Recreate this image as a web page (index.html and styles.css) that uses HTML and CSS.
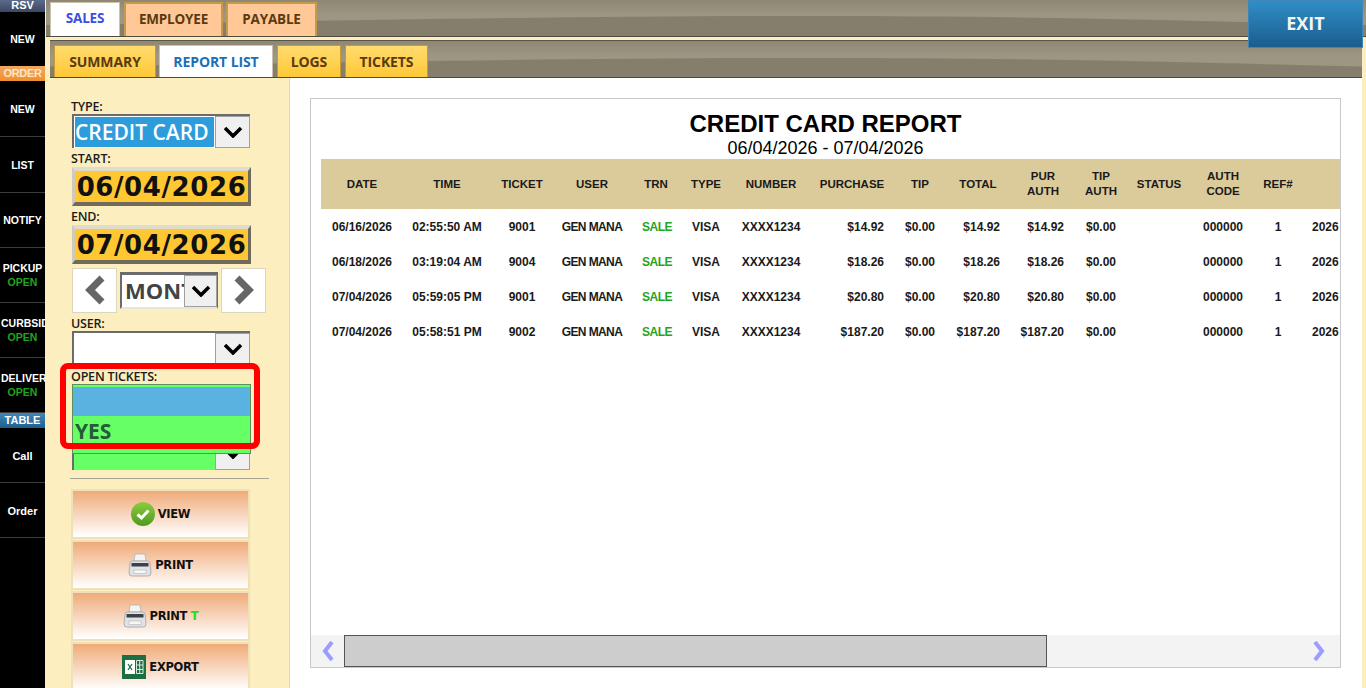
FILE: index.html
```html
<!DOCTYPE html>
<html lang="en">
<head>
    <meta charset="UTF-8">
    <title>Credit Card Report</title>
    <link rel="stylesheet" href="styles.css">
</head>
<body>
    <!-- Left black menu -->
    <nav class="side-menu">
        <div class="side-head head-rsv">RSV</div>
        <div class="side-item item-first">NEW</div>
        <div class="side-head head-order">ORDER</div>
        <div class="side-item item-tall">NEW</div>
        <div class="side-item item-tall">LIST</div>
        <div class="side-item">NOTIFY</div>
        <div class="side-item">PICKUP<span class="open-text">OPEN</span></div>
        <div class="side-item item-clip"><span class="clip-name">CURBSIDE</span><span class="open-text">OPEN</span></div>
        <div class="side-item item-clip"><span class="clip-name">DELIVERY</span><span class="open-text">OPEN</span></div>
        <div class="side-head head-table">TABLE</div>
        <div class="side-item item-plain">Call</div>
        <div class="side-item item-plain">Order</div>
    </nav>

    <main class="main">
        <div class="tab-bar top-bar">
            <svg class="wave" viewBox="0 0 1320 36" preserveAspectRatio="none"><path d="M0 25 C300 21 500 16 760 16 C1000 16 1150 21 1320 25 V36 H0 Z" fill="#857e6c"/></svg>
            <div class="tab tab-active tab-sales">SALES</div>
            <div class="tab tab-orange tab-employee">EMPLOYEE</div>
            <div class="tab tab-orange tab-payable">PAYABLE</div>
        </div>
        <div class="tab-bar sub-bar">
            <svg class="wave" viewBox="0 0 1312 38" preserveAspectRatio="none"><path d="M0 27 C300 23 500 18 760 18 C1000 18 1150 23 1312 27 V38 H0 Z" fill="#857e6c"/></svg>
            <div class="tab tab-yellow tab-summary">SUMMARY</div>
            <div class="tab tab-active tab-report">REPORT LIST</div>
            <div class="tab tab-yellow tab-logs">LOGS</div>
            <div class="tab tab-yellow tab-tickets">TICKETS</div>
        </div>

        <div class="work">
            <aside class="filters">
                <div class="field-label">TYPE:</div>
                <div class="select">
                    <div class="select-value value-blue">CREDIT CARD</div>
                    <div class="select-btn"><svg class="chev" viewBox="0 0 20 12"><path d="M2 2 L10 10 L18 2"/></svg></div>
                </div>

                <div class="field-label label-gap">START:</div>
                <div class="date-box">06/04/2026</div>
                <div class="field-label label-gap">END:</div>
                <div class="date-box">07/04/2026</div>

                <div class="period-row">
                    <div class="arrow-btn"><svg viewBox="0 0 24 32" class="arrow-icon"><path d="M19 4 L7 16 L19 28"/></svg></div>
                    <div class="period-select">
                        <div class="period-value">MONTH</div>
                        <div class="select-btn period-btn"><svg class="chev" viewBox="0 0 20 12"><path d="M2 2 L10 10 L18 2"/></svg></div>
                    </div>
                    <div class="arrow-btn"><svg viewBox="0 0 24 32" class="arrow-icon"><path d="M5 4 L17 16 L5 28"/></svg></div>
                </div>

                <div class="field-label label-user">USER:</div>
                <div class="select">
                    <div class="select-value value-white"></div>
                    <div class="select-btn"><svg class="chev" viewBox="0 0 20 12"><path d="M2 2 L10 10 L18 2"/></svg></div>
                </div>

                <div class="open-field">
                    <div class="field-label label-open">OPEN TICKETS:</div>
                    <div class="select select-open">
                        <div class="select-value value-green"></div>
                        <div class="select-btn"><svg class="chev" viewBox="0 0 20 12"><path d="M2 2 L10 10 L18 2"/></svg></div>
                    </div>
                    <div class="drop-list">
                        <div class="drop-blank"></div>
                        <div class="drop-yes">YES</div>
                    </div>
                    <div class="red-mark"></div>
                </div>

                <div class="divider"></div>

                <div class="action-btn">
                    <svg class="action-icon" viewBox="0 0 24 24">
                        <defs><linearGradient id="okGrad" x1="0" y1="0" x2="0" y2="1"><stop offset="0" stop-color="#8ccb3e"/><stop offset="1" stop-color="#4f9a1e"/></linearGradient></defs>
                        <circle cx="12" cy="12" r="12" fill="url(#okGrad)"/>
                        <path d="M6.5 12.5 L10.5 16 L17.5 8.5" fill="none" stroke="#fff" stroke-width="3"/>
                    </svg>
                    <span>VIEW</span>
                </div>
                <div class="action-btn">
                    <svg class="action-icon" viewBox="0 0 24 24">
                        <path d="M6 8 L7 1 H17 L18 8 Z" fill="#f4f4f4" stroke="#aaa" stroke-width="0.7"/>
                        <path d="M2 10 Q2 8 5 8 H19 Q22 8 22 10 L23 20 Q23 23 20 23 H4 Q1 23 1 20 Z" fill="#dfe2e6" stroke="#9a9a9a" stroke-width="0.7"/>
                        <rect x="3.5" y="10" width="17" height="3.5" fill="#3c4148"/>
                        <rect x="6" y="17" width="12" height="3.5" fill="#f7f7f7" stroke="#aaa" stroke-width="0.5"/>
                    </svg>
                    <span>PRINT</span>
                </div>
                <div class="action-btn">
                    <svg class="action-icon" viewBox="0 0 24 24">
                        <path d="M6 8 L7 1 H17 L18 8 Z" fill="#f4f4f4" stroke="#aaa" stroke-width="0.7"/>
                        <path d="M2 10 Q2 8 5 8 H19 Q22 8 22 10 L23 20 Q23 23 20 23 H4 Q1 23 1 20 Z" fill="#dfe2e6" stroke="#9a9a9a" stroke-width="0.7"/>
                        <rect x="3.5" y="10" width="17" height="3.5" fill="#3c4148"/>
                        <rect x="6" y="17" width="12" height="3.5" fill="#f7f7f7" stroke="#aaa" stroke-width="0.5"/>
                    </svg>
                    <span>PRINT <b class="green-t">T</b></span>
                </div>
                <div class="action-btn">
                    <svg class="action-icon" viewBox="0 0 24 24">
                        <rect width="24" height="24" fill="#1d6f42"/>
                        <rect x="3" y="5" width="10" height="14" fill="#fff"/>
                        <path d="M6 9 L10 15 M10 9 L6 15" stroke="#1d6f42" stroke-width="1.3"/>
                        <path d="M14.5 5.5 H21 V18.5 H14.5 Z M14.5 10 H21 M14.5 14.5 H21 M17.7 5.5 V18.5" fill="none" stroke="#d8eadf" stroke-width="1"/>
                    </svg>
                    <span>EXPORT</span>
                </div>
            </aside>

            <section class="content">
                <div class="report">
                    <h1 class="report-title">CREDIT CARD REPORT</h1>
                    <p class="report-range">06/04/2026 - 07/04/2026</p>
                    <div class="table-wrap">
                        <table class="report-table">
                            <colgroup>
                                <col class="c82"><col class="c88"><col class="c62"><col class="c78"><col class="c50"><col class="c50"><col class="c80"><col class="c82"><col class="c54"><col class="c62"><col class="c62"><col class="c60"><col class="c56"><col class="c72"><col class="c38"><col class="c43">
                            </colgroup>
                            <thead>
                                <tr>
                                    <th>DATE</th><th>TIME</th><th>TICKET</th><th>USER</th><th>TRN</th><th>TYPE</th><th>NUMBER</th><th>PURCHASE</th><th>TIP</th><th>TOTAL</th><th class="th-pur">PUR<br>AUTH</th><th>TIP<br>AUTH</th><th>STATUS</th><th>AUTH<br>CODE</th><th>REF#</th><th></th>
                                </tr>
                            </thead>
                            <tbody>
                                <tr><td>06/16/2026</td><td>02:55:50 AM</td><td>9001</td><td class="user">GEN MANA</td><td class="sale">SALE</td><td>VISA</td><td>XXXX1234</td><td class="money">$14.92</td><td>$0.00</td><td class="money">$14.92</td><td class="money money-auth">$14.92</td><td>$0.00</td><td></td><td>000000</td><td>1</td><td class="year">2026</td></tr>
                                <tr><td>06/18/2026</td><td>03:19:04 AM</td><td>9004</td><td class="user">GEN MANA</td><td class="sale">SALE</td><td>VISA</td><td>XXXX1234</td><td class="money">$18.26</td><td>$0.00</td><td class="money">$18.26</td><td class="money money-auth">$18.26</td><td>$0.00</td><td></td><td>000000</td><td>1</td><td class="year">2026</td></tr>
                                <tr><td>07/04/2026</td><td>05:59:05 PM</td><td>9001</td><td class="user">GEN MANA</td><td class="sale">SALE</td><td>VISA</td><td>XXXX1234</td><td class="money">$20.80</td><td>$0.00</td><td class="money">$20.80</td><td class="money money-auth">$20.80</td><td>$0.00</td><td></td><td>000000</td><td>1</td><td class="year">2026</td></tr>
                                <tr><td>07/04/2026</td><td>05:58:51 PM</td><td>9002</td><td class="user">GEN MANA</td><td class="sale">SALE</td><td>VISA</td><td>XXXX1234</td><td class="money">$187.20</td><td>$0.00</td><td class="money">$187.20</td><td class="money money-auth">$187.20</td><td>$0.00</td><td></td><td>000000</td><td>1</td><td class="year">2026</td></tr>
                            </tbody>
                        </table>
                    </div>
                    <div class="h-scroll">
                        <div class="scroll-end"><svg viewBox="0 0 14 20" class="scroll-arrow"><path d="M11 1 L4 10 L11 19"/></svg></div>
                        <div class="scroll-thumb"></div>
                        <div class="scroll-rest"><svg viewBox="0 0 14 20" class="scroll-arrow"><path d="M3 1 L10 10 L3 19"/></svg></div>
                    </div>
                </div>
            </section>
        </div>

        <div class="exit-btn">EXIT</div>
    </main>
</body>
</html>
```

FILE: styles.css
```css
* {
    box-sizing: border-box;
    margin: 0;
    padding: 0;
}

html, body {
    height: 688px;
    overflow: hidden;
}

body {
    display: flex;
    background-color: #fdeebf;
    font-family: 'Liberation Sans', Arial, sans-serif;
}

/* Left menu */
.side-menu {
    width: 45px;
    height: 688px;
    flex-shrink: 0;
    background-color: #000;
    color: #fff;
    overflow: hidden;
}

.side-head {
    width: 45px;
    color: #fff;
    font-size: 11px;
    font-weight: bold;
    text-align: center;
}

.head-rsv {
    height: 12px;
    line-height: 10px;
    background: linear-gradient(#5c6a8c, #3d4660);
}

.head-order {
    height: 15px;
    line-height: 15px;
    background: linear-gradient(#f0a860, #f28e2c);
    color: #fde7c9;
    letter-spacing: -0.3px;
}

.head-table {
    height: 15px;
    line-height: 15px;
    background: linear-gradient(#3f88b8, #1f5f8c);
}

.side-item {
    height: 55px;
    border-bottom: 1px solid #3c3c3c;
    display: flex;
    flex-direction: column;
    align-items: center;
    justify-content: center;
    font-size: 10.5px;
    font-weight: bold;
    line-height: 14px;
    white-space: nowrap;
}

.item-first {
    height: 54px;
    border-bottom: none;
}

.item-tall {
    height: 56px;
}

.item-plain {
    font-size: 11px;
    padding-top: 1px;
}

.clip-name {
    align-self: stretch;
    padding-left: 1px;
    overflow: hidden;
}

.open-text {
    color: #1fa51f;
}

/* Main area */
.main {
    position: relative;
    flex: 1;
    height: 688px;
    display: flex;
    flex-direction: column;
    min-width: 0;
}

.tab-bar {
    position: relative;
    overflow: hidden;
    background: linear-gradient(#8d8773, #9c9683 40%);
    border-bottom: 1px solid #4f4a3e;
}

.wave {
    position: absolute;
    top: 0;
    left: 0;
    width: 100%;
    height: 100%;
}

.top-bar {
    height: 37px;
    margin-left: 1px;
}

.sub-bar {
    height: 38px;
    margin: 3px 4px 0 5px;
    border-top: 1px solid #5a5546;
}

.tab {
    position: absolute;
    bottom: 0;
    display: flex;
    align-items: center;
    justify-content: center;
    font-family: 'Open Sans', sans-serif;
    font-weight: 700;
    font-size: 13.5px;
    color: #5a3a10;
    letter-spacing: -0.2px;
}

.tab-active {
    background-color: #fff;
    border: 1px solid #c9c3ad;
    border-bottom: none;
}

.tab-orange {
    background-color: #ffc896;
    border: 2px solid #c49a4e;
    border-bottom: none;
}

.tab-yellow {
    background: linear-gradient(#ffdb6e, #ffc936);
    border-top: 1px solid #c99a30;
    border-left: 1px solid #c99a30;
    border-right: 1px solid #c99a30;
}

.top-bar .tab {
    top: 2px;
    padding-bottom: 3px;
}

.sub-bar .tab {
    top: 4px;
    font-size: 14px;
    letter-spacing: -0.1px;
}

.tab-sales { left: 4px; width: 70px; color: #3b50e0; }
.tab-employee { left: 78px; width: 99px; }
.tab-payable { left: 180px; width: 91px; }
.tab-summary { left: 4px; width: 102px; }
.tab-report { left: 109px; width: 114px; color: #1a70b8; }
.tab-logs { left: 227px; width: 64px; }
.tab-tickets { left: 295px; width: 83px; }

.exit-btn {
    position: absolute;
    top: 0;
    left: 1203px;
    width: 115px;
    height: 48px;
    display: flex;
    align-items: center;
    justify-content: center;
    padding-bottom: 3px;
    background: linear-gradient(#2f8fc6, #1c5c8e);
    border: 1px solid #3f86b8;
    color: #f5f5f5;
    font-family: 'Open Sans', sans-serif;
    font-weight: 700;
    font-size: 18px;
}

.work {
    flex: 1;
    display: flex;
    min-height: 0;
}

/* Filter column */
.filters {
    width: 245px;
    flex-shrink: 0;
    padding: 22px 0 0 26px;
    border-right: 1px solid #ddd6bd;
    overflow: hidden;
}

.field-label {
    height: 14px;
    line-height: 14px;
    font-family: 'Open Sans', sans-serif;
    font-weight: 600;
    font-size: 12.5px;
    color: #1b1b1b;
    letter-spacing: -0.2px;
}

.label-gap {
    margin-top: 4px;
}

.label-user {
    margin-top: 4px;
}

.select {
    display: flex;
    width: 178px;
    height: 34px;
    margin-left: 1px;
    border-top: 2px solid #6b6b6b;
    border-left: 2px solid #6b6b6b;
}

.select-value {
    width: 141px;
    font-family: 'Open Sans', sans-serif;
    font-weight: 600;
    font-size: 21px;
    line-height: 30px;
    white-space: nowrap;
    overflow: hidden;
}

.value-blue {
    background-color: #2d9cdb;
    color: #fff;
    border: 1px solid #fff;
}

.value-white {
    background-color: #fff;
}

.value-green {
    background-color: #66ff66;
}

.select-btn {
    flex: 1;
    display: flex;
    align-items: center;
    justify-content: center;
    background-color: #f0f0f0;
    border: 1px solid #a0a0a0;
}

.chev {
    width: 20px;
    height: 12px;
    fill: none;
    stroke: #000;
    stroke-width: 3.5;
}

.date-box {
    width: 179px;
    height: 39px;
    margin: 1px 0 0 1px;
    background-color: #ffc832;
    border-top: 4px solid #e0dccb;
    border-left: 3px solid #cfcabb;
    border-right: 3px solid #6f6a5c;
    border-bottom: 4px solid #6f6a5c;
    font-family: 'DejaVu Sans', sans-serif;
    font-weight: bold;
    font-size: 26px;
    line-height: 32px;
    text-align: center;
    letter-spacing: 0.6px;
    color: #111;
    white-space: nowrap;
    overflow: hidden;
}

.period-row {
    display: flex;
    align-items: center;
    justify-content: space-between;
    width: 194px;
    height: 46px;
    margin: 3px 0 0 1px;
}

.arrow-btn {
    width: 45px;
    height: 45px;
    background-color: #fff;
    border: 1px solid #ddd6bd;
    display: flex;
    align-items: center;
    justify-content: center;
}

.arrow-icon {
    width: 24px;
    height: 32px;
    fill: none;
    stroke: #666;
    stroke-width: 7;
}

.period-select {
    display: flex;
    width: 98px;
    height: 37px;
    background-color: #fff;
    border-top: 3px solid #6b6b6b;
    border-left: 2px solid #6b6b6b;
    border-right: 1px solid #6b6b6b;
    border-bottom: 2px solid #e8e4d6;
}

.period-value {
    width: 62px;
    padding-left: 3px;
    font-family: 'Open Sans', sans-serif;
    font-weight: 700;
    font-size: 22px;
    line-height: 30px;
    color: #444;
    overflow: hidden;
    white-space: nowrap;
}

.period-btn {
    flex: 1;
}

/* Open tickets with its list dropped over the field */
.open-field {
    position: relative;
    margin-top: 5px;
}

.label-open {
    margin-bottom: 52px;
}

.select-open {
    border-top: none;
}

.select-open .select-btn {
    border-top: none;
}

.drop-list {
    position: absolute;
    top: 14px;
    left: 1px;
    width: 179px;
    height: 70px;
    background-color: #66ff66;
    border: 1px solid #5e8f5e;
    padding-top: 2px;
}

.drop-blank {
    height: 29px;
    background-color: #5ab2e0;
}

.drop-yes {
    height: 30px;
    padding-left: 2px;
    font-family: 'Open Sans', sans-serif;
    font-weight: 700;
    font-size: 21px;
    line-height: 30px;
    color: #27593a;
}

.red-mark {
    position: absolute;
    top: -7px;
    left: -11px;
    width: 200px;
    height: 86px;
    border: 6px solid #f00;
    border-radius: 8px;
}

.divider {
    width: 199px;
    height: 1px;
    margin: 8px 0 0 -1px;
    background-color: #a8a290;
}

.action-btn {
    display: flex;
    align-items: center;
    justify-content: center;
    gap: 3px;
    width: 179px;
    height: 50px;
    margin-top: 1px;
    background: linear-gradient(#f0aa78, #fff);
    border: 2px solid #eee0b9;
    font-family: 'DejaVu Sans', sans-serif;
    font-weight: bold;
    font-size: 11.5px;
    color: #111;
    letter-spacing: -0.3px;
}

.divider + .action-btn {
    margin-top: 10px;
}

.action-icon {
    width: 24px;
    height: 24px;
}

.green-t {
    color: #22dd22;
}

/* Report */
.content {
    flex: 1;
    min-width: 0;
    background-color: #fff;
    padding: 20px 21px 20px 20px;
    margin-right: 4px;
}

.report {
    height: 570px;
    border: 1px solid #c8c8c8;
    display: flex;
    flex-direction: column;
    color: #000;
}

.report-title {
    font-size: 24px;
    line-height: 28px;
    margin-top: 11px;
    text-align: center;
}

.report-range {
    font-size: 18px;
    line-height: 21px;
    height: 21px;
    text-align: center;
}

.table-wrap {
    flex: 1;
    margin-left: 10px;
    overflow: hidden;
    min-height: 0;
}

.report-table {
    border-collapse: collapse;
    table-layout: fixed;
    width: 1019px;
    font-size: 12px;
    font-weight: bold;
    color: #1a1a1a;
}

.c82 { width: 82px; }
.c88 { width: 88px; }
.c62 { width: 62px; }
.c78 { width: 78px; }
.c50 { width: 50px; }
.c80 { width: 80px; }
.c54 { width: 54px; }
.c60 { width: 60px; }
.c56 { width: 56px; }
.c72 { width: 72px; }
.c38 { width: 38px; }
.c43 { width: 43px; }

.report-table th {
    height: 50px;
    background-color: #dccb9a;
    font-size: 11.5px;
    font-weight: bold;
    line-height: 15px;
    text-align: center;
}

.report-table th.th-pur {
    padding-left: 6px;
}

.report-table td {
    height: 35px;
    text-align: center;
    white-space: nowrap;
}

.report-table td.money {
    text-align: right;
    padding-right: 9px;
}

.report-table td.money-auth {
    padding-right: 7px;
}

.report-table td.user {
    letter-spacing: -0.6px;
}

.report-table td.sale {
    color: #1fa51f;
    letter-spacing: -0.5px;
    padding-left: 2px;
}

.report-table td.year {
    text-align: left;
    padding-left: 15px;
}

.h-scroll {
    display: flex;
    height: 32px;
    background-color: #f3f3f3;
}

.scroll-end {
    width: 33px;
    display: flex;
    align-items: center;
    justify-content: center;
}

.scroll-thumb {
    width: 703px;
    background-color: #cdcdcd;
    border: 1px solid #555;
}

.scroll-rest {
    flex: 1;
    display: flex;
    align-items: center;
    justify-content: flex-end;
    padding-right: 12px;
}

.scroll-arrow {
    width: 18px;
    height: 20px;
    fill: none;
    stroke: #9a9cff;
    stroke-width: 4;
}
```
